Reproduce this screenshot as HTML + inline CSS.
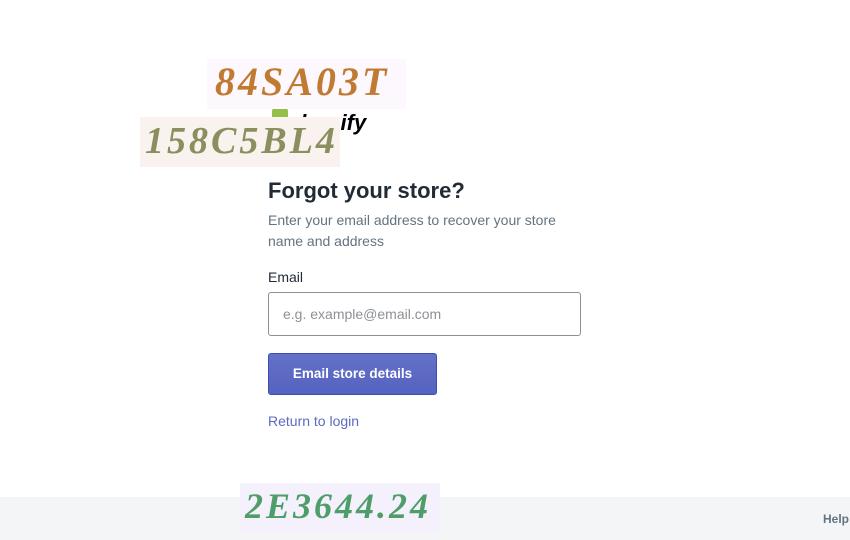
<!DOCTYPE html>
<html><head><style>
body{margin:0;width:850px;height:540px;position:relative;background:#fff;font-family:"Liberation Sans",sans-serif;overflow:hidden}
.a{position:absolute}
.cap{position:absolute;font-family:"Liberation Serif",serif;font-style:italic;font-weight:bold;letter-spacing:3px;line-height:1}
</style></head><body>
<div class="a" style="left:0;top:497px;width:850px;height:43px;background:#f4f5f7"></div>
<div class="a" style="left:823px;top:512px;font-size:12px;font-weight:bold;color:#637381">Help</div>
<div class="a" style="left:272px;top:108px;width:16px;height:14px;background:#95bf47;border-radius:3px"></div>
<div class="a" style="left:288px;top:110px;font-size:22px;font-weight:bold;font-style:italic;color:#000">shopify</div>
<div class="a" style="left:207px;top:59px;width:199px;height:50px;background:#fdf8fd"></div>
<div class="cap" style="left:215px;top:62px;font-size:40px;color:#c07a32">84SA03T</div>
<div class="a" style="left:140px;top:117px;width:200px;height:50px;background:#faf2ee"></div>
<div class="cap" style="left:145px;top:122px;font-size:38px;color:#8b8e5e">158C5BL4</div>
<div class="a" style="left:240px;top:483px;width:200px;height:50px;background:#f4f1fd"></div>
<div class="cap" style="left:245px;top:488px;font-size:36px;color:#4f9e6a">2E3644.24</div>
<div class="a" style="left:268px;top:178px;font-size:22px;font-weight:bold;color:#212b36">Forgot your store?</div>
<div class="a" style="left:268px;top:210px;width:300px;font-size:14px;line-height:21px;color:#637381">Enter your email address to recover your store name and address</div>
<div class="a" style="left:268px;top:269px;font-size:14px;color:#212b36">Email</div>
<div class="a" style="left:268px;top:292px;border:1px solid #8c9196;border-radius:3px;box-sizing:border-box;width:313px;height:44px"></div>
<div class="a" style="left:283px;top:306px;font-size:14px;color:#8c9196">e.g. example@email.com</div>
<div class="a" style="left:268px;top:353px;width:169px;height:42px;background:linear-gradient(#6371c7,#5563c1);border:1px solid #3f4eae;box-sizing:border-box;border-radius:3px;color:#fff;font-size:13.5px;font-weight:bold;text-align:center;line-height:40px">Email store details</div>
<div class="a" style="left:268px;top:413px;font-size:14px;color:#5c6ac4">Return to login</div>
</body></html>
